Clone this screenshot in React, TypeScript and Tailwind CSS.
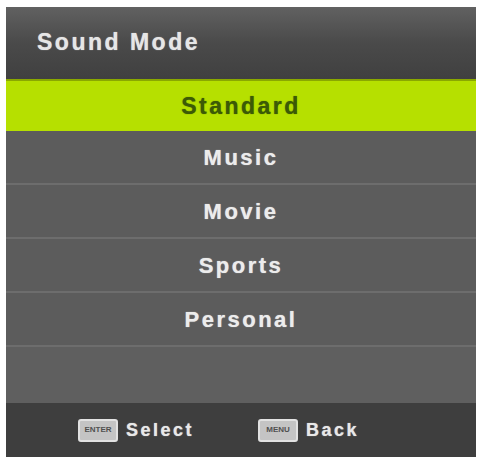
import React from 'react';

const items = ['Standard', 'Music', 'Movie', 'Sports', 'Personal'];

function KeyIcon({ label }: { label: string }) {
  return (
    <span className="flex h-[23px] w-[40px] items-center justify-center rounded-[3px] border-2 border-[#e2e2e2] bg-[#c4c4c4] text-[8px] font-bold leading-none text-[#505050]">
      {label}
    </span>
  );
}

export default function App() {
  return (
    <div
      className="h-[457px] w-[478px] bg-white pl-[6px] pt-[7px] pr-[2px]"
      style={{ fontFamily: '"Liberation Sans", Arial, sans-serif' }}
    >
      <div className="flex h-[450px] flex-col bg-[#5d5d5d]">
        <div className="flex h-[72px] items-center bg-gradient-to-b from-[#616161] via-[#4a4a4a] to-[#404040] pl-[31px] pb-[2px]">
          <span className="text-[23px] font-bold tracking-[2.5px] text-[#e6e6e6] [text-shadow:0_0_1px_rgba(255,255,255,0.7)]">
            Sound Mode
          </span>
        </div>
        <div className="flex flex-col">
          {items.map((item, i) =>
            i === 0 ? (
              <div
                key={item}
                className="flex h-[52px] items-center justify-center border-t-2 border-[#8aa800] bg-[#b6e000]"
              >
                <span className="text-[23px] font-bold tracking-[2.5px] text-[#3c5a06] [text-shadow:0_0_1px_rgba(40,70,0,0.7)]">
                  {item}
                </span>
              </div>
            ) : (
              <div
                key={item}
                className="flex h-[54px] items-center justify-center border-b-2 border-[#6d6d6d] bg-[#5c5c5c]"
              >
                <span className="text-[22px] font-bold tracking-[2.5px] text-[#ececec] [text-shadow:0_0_1px_rgba(255,255,255,0.7)]">
                  {item}
                </span>
              </div>
            )
          )}
        </div>
        <div className="flex-1 bg-[#5f5f5f]" />
        <div className="flex h-[54px] items-center bg-[#3e3e3e]">
          <div className="ml-[72px] flex items-center gap-[8px]">
            <KeyIcon label="ENTER" />
            <span className="text-[18px] font-bold tracking-[2.5px] text-[#e8e8e8] [text-shadow:0_0_1px_rgba(255,255,255,0.7)]">
              Select
            </span>
          </div>
          <div className="ml-[64px] flex items-center gap-[8px]">
            <KeyIcon label="MENU" />
            <span className="text-[18px] font-bold tracking-[2.5px] text-[#e8e8e8] [text-shadow:0_0_1px_rgba(255,255,255,0.7)]">
              Back
            </span>
          </div>
        </div>
      </div>
    </div>
  );
}
